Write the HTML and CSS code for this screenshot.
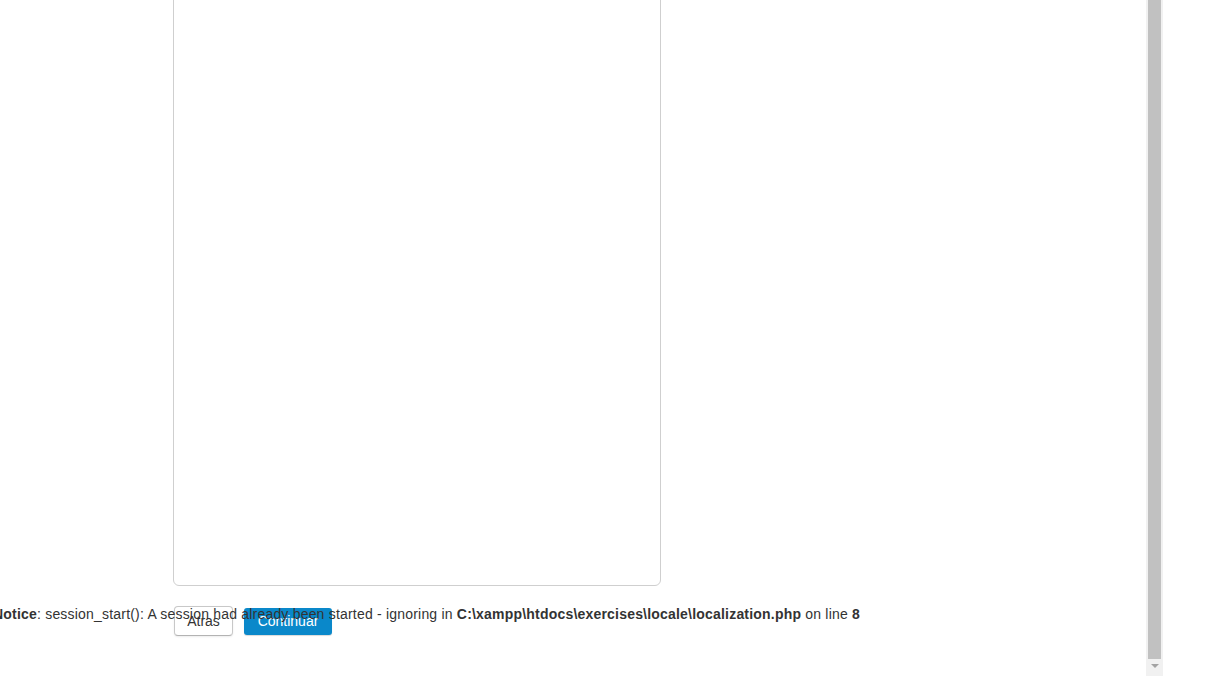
FILE: index.html
```html
<!DOCTYPE html>
<html>
<head>
<meta charset="utf-8">
<link rel="stylesheet" href="styles.css">
</head>
<body>
<div class="page">
  <div class="panel"></div>
  <div class="actions">
    <button class="btn">Atras</button>
    <button class="btn btn-primary">Continuar</button>
  </div>
</div>
<div class="notice"><b>Notice</b>: session_start(): A session had already been started - ignoring in <b>C:\xampp\htdocs\exercises\locale\localization.php</b> on line <b>8</b></div>
<div class="scrollbar">
  <div class="thumb"></div>
  <div class="arrow"></div>
</div>
</body>
</html>
```
FILE: styles.css
```css
html, body {
  margin: 0;
  padding: 0;
  background: #fff;
  overflow: hidden;
}
body {
  width: 1208px;
  height: 684px;
  position: relative;
  font-family: "Liberation Sans", Arial, sans-serif;
  font-size: 14px;
  line-height: 20px;
  color: #333;
}
.page {
  padding-left: 173px;
}
.panel {
  width: 486px;
  height: 600px;
  margin-top: -16px;
  border: 1px solid #cfcfcf;
  border-radius: 6px;
}
.actions {
  display: flex;
  align-items: center;
  gap: 11px;
  margin-top: 20px;
  padding-left: 1px;
}
.btn {
  font-family: "Liberation Sans", Arial, sans-serif;
  font-size: 14px;
  line-height: 20px;
  color: #333;
  background: #fff;
  border: 1px solid #c8c8c8;
  border-bottom-color: #b3b3b3;
  border-radius: 4px;
  height: 30px;
  width: 59px;
  padding: 0;
  box-shadow: 0 1px 2px rgba(0,0,0,0.08);
}
.btn-primary {
  width: 88px;
  height: 27px;
  color: #fff;
  background: #0a88ca;
  border: 0;
  border-radius: 3px;
  box-shadow: 0 1px 1px rgba(0,0,0,0.15);
}
.notice {
  position: absolute;
  left: -7px;
  top: 604px;
  white-space: nowrap;
  letter-spacing: 0.2px;
  color: #333;
}
.scrollbar {
  position: absolute;
  left: 1146px;
  top: 0;
  width: 17px;
  height: 676px;
  background: #f1f1f1;
}
.thumb {
  margin-left: 2px;
  width: 13px;
  height: 659px;
  background: #c1c1c1;
}
.arrow {
  margin: 5px auto 0;
  width: 0;
  height: 0;
  border-left: 4px solid transparent;
  border-right: 4px solid transparent;
  border-top: 4px solid #a3a3a3;
}
```
